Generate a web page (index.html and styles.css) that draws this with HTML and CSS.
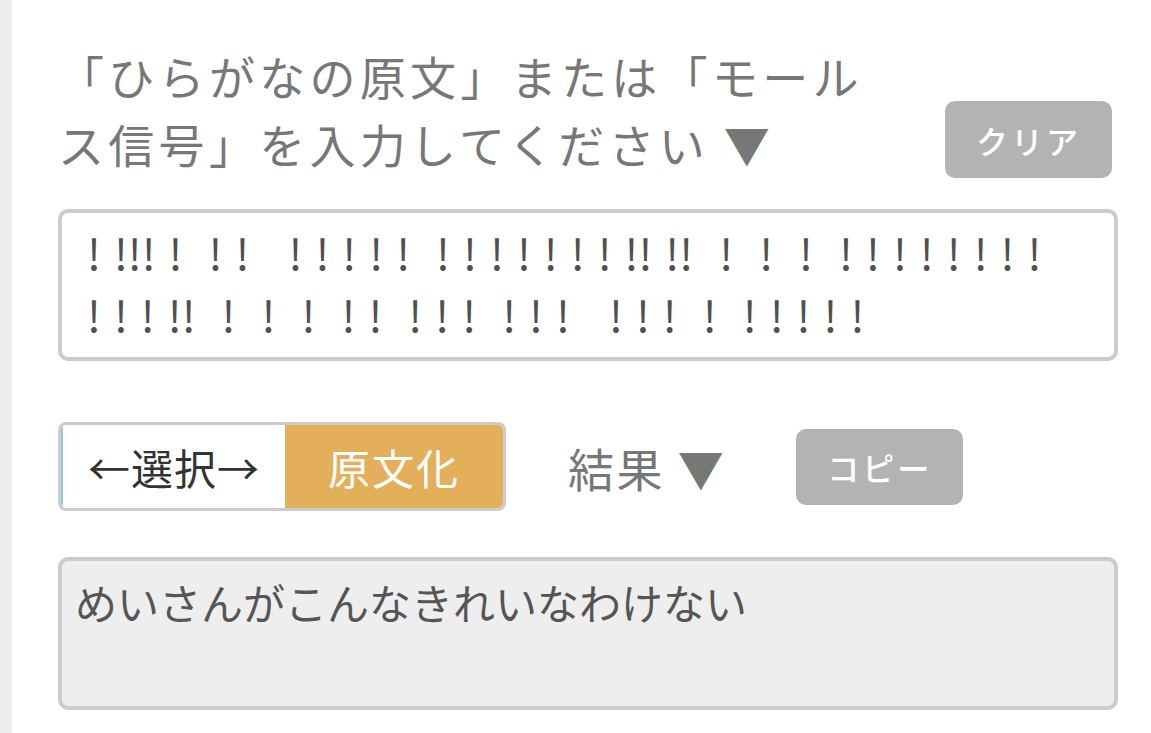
FILE: index.html
```html
<!DOCTYPE html>
<html lang="ja">
<head>
<meta charset="utf-8">
<title>モールス信号変換</title>
<link rel="stylesheet" href="styles.css">
</head>
<body>
<div class="page">
  <aside class="rail"></aside>
  <main class="main">
    <div class="head-row">
      <h1 class="label head-label">「ひらがなの原文」または「モールス信号」を入力してください ▼</h1>
      <button class="btn clear-btn" type="button">クリア</button>
    </div>
    <div class="input-box">! !!! !  ! !   ! ! ! ! !  ! ! ! ! ! ! ! !! !!  !  !  !  ! ! ! ! ! ! ! !
! ! ! !!  !  !  !  ! !  ! ! !  ! ! !   ! ! !  !  ! ! ! ! !</div>
    <div class="ctrl-row">
      <div class="group">
        <div class="select">←選択→</div>
        <div class="go">原文化</div>
      </div>
      <span class="label result-label">結果 ▼</span>
      <button class="btn copy-btn" type="button">コピー</button>
    </div>
    <div class="output-box">めいさんがこんなきれいなわけない</div>
  </main>
</div>
</body>
</html>
```

FILE: styles.css
```css
html, body {
  margin: 0;
  padding: 0;
  background: #ffffff;
}

body {
  font-family: "Noto Sans CJK JP", "Noto Sans", sans-serif;
}

.page {
  display: flex;
  min-height: 100vh;
}

.rail {
  flex: none;
  width: 12px;
  background: #eeeeee;
}

.main {
  flex: 1;
  padding: 41px 33px 0 46px;
}

.head-row {
  display: flex;
  justify-content: space-between;
  align-items: flex-end;
}

.label {
  color: #777777;
  font-weight: 400;
}

.head-label {
  margin: 0;
  width: 850px;
  font-size: 46px;
  line-height: 68px;
  letter-spacing: 4.3px;
}

.btn {
  flex: none;
  width: 167px;
  height: 77px;
  border: 0;
  border-radius: 10px;
  background: #b3b3b3;
  color: #ffffff;
  font-family: "Noto Sans CJK JP", sans-serif;
  font-size: 32px;
  font-weight: 500;
  letter-spacing: 3px;
  padding: 0;
}

.clear-btn {
  margin-right: 6px;
  margin-bottom: -1px;
}

.input-box {
  margin-top: 32px;
  box-sizing: border-box;
  height: 152px;
  border: 4px solid #cccccc;
  border-radius: 10px;
  padding: 7px 20px 0 25px;
  font-size: 43px;
  line-height: 62px;
  color: #505050;
  white-space: pre;
  word-spacing: 3.4px;
  overflow: hidden;
}

.ctrl-row {
  margin-top: 61px;
  display: flex;
  align-items: center;
}

.group {
  flex: none;
  box-sizing: border-box;
  width: 448px;
  height: 89px;
  border: 3px solid #cccccc;
  border-radius: 8px;
  display: flex;
  overflow: hidden;
}

.select {
  box-sizing: border-box;
  width: 224px;
  border-left: 2px solid #8fcbe0;
  background: #ffffff;
  color: #333333;
  font-size: 42px;
  letter-spacing: 1px;
  display: flex;
  align-items: center;
  justify-content: center;
}

.go {
  flex: 1;
  background: #e4af5b;
  color: #ffffff;
  font-size: 42px;
  letter-spacing: 2px;
  display: flex;
  align-items: center;
  justify-content: center;
}

.result-label {
  margin-left: 62px;
  font-size: 46px;
  letter-spacing: 2.5px;
  line-height: 1;
}

.copy-btn {
  margin-left: 70px;
  height: 76px;
}

.output-box {
  margin-top: 46px;
  box-sizing: border-box;
  height: 153px;
  background: #eeeeee;
  border: 4px solid #cccccc;
  border-radius: 10px;
  padding: 10px 13px;
  font-size: 42px;
  line-height: 62px;
  color: #555555;
}
```
